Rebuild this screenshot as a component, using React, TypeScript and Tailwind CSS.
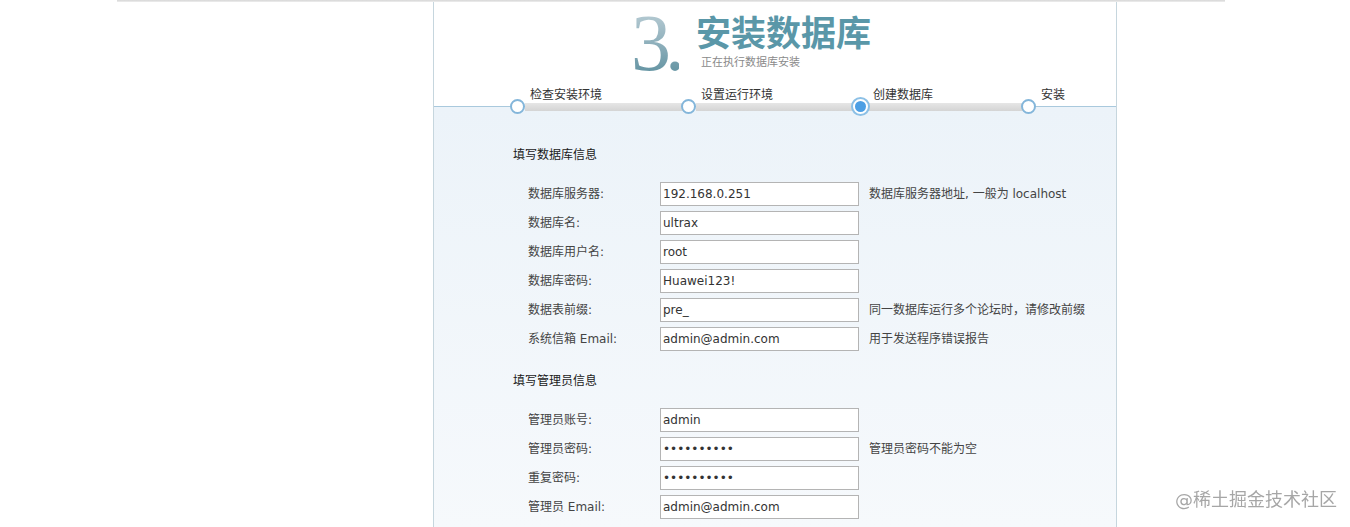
import React from "react";

const cjk = "font-['DejaVu_Sans','Noto_Sans_CJK_SC',sans-serif]";

interface Field {
  label: string;
  value: string;
  note?: string;
}

const dbFields: Field[] = [
  { label: "数据库服务器:", value: "192.168.0.251", note: "数据库服务器地址, 一般为 localhost" },
  { label: "数据库名:", value: "ultrax" },
  { label: "数据库用户名:", value: "root" },
  { label: "数据库密码:", value: "Huawei123!" },
  { label: "数据表前缀:", value: "pre_", note: "同一数据库运行多个论坛时，请修改前缀" },
  { label: "系统信箱 Email:", value: "admin@admin.com", note: "用于发送程序错误报告" },
];

const adminFields: Field[] = [
  { label: "管理员账号:", value: "admin" },
  { label: "管理员密码:", value: "••••••••••", note: "管理员密码不能为空" },
  { label: "重复密码:", value: "••••••••••" },
  { label: "管理员 Email:", value: "admin@admin.com" },
];

const steps = [
  { label: "检查安装环境", width: "w-[171px]" },
  { label: "设置运行环境", width: "w-[172px]" },
  { label: "创建数据库", width: "w-[168px]", active: true },
  { label: "安装", width: "w-[60px]", last: true },
];

export default function App() {
  return (
    <div className={`relative h-[527px] w-full overflow-hidden bg-white ${cjk}`}>
      <div className="ml-[117px] h-[2px] w-[1108px] bg-gradient-to-b from-[#d6d6d6] to-[#eeeeee]" />

      <div className="ml-[433px] h-[525px] w-[684px] border-x border-[#c6d6de]">
        {/* header */}
        <div className="relative h-[105px] border-b border-[#a9c9dd] bg-white">
          <div className="flex items-start pl-[197px]">
            <div className="-mt-[5px] h-[92px] font-['Liberation_Serif',serif] text-[80px] leading-[92px]">
              <span className="bg-gradient-to-b from-[#c8d7dd] via-[#8fb0bc] to-[#4f8797] bg-clip-text tracking-[-6px] text-transparent">
                3.
              </span>
            </div>
            <div className="ml-[17px] mt-[14px] flex flex-col">
              <span className="text-[35px] font-bold leading-[36px] text-[#5a97a8]">安装数据库</span>
              <span className="ml-[5px] mt-[4px] text-[11px] leading-[14px] text-[#8a8a8a]">正在执行数据库安装</span>
            </div>
          </div>

          {/* steps */}
          <div className="relative z-10 -mt-[1px] flex pl-[76px]">
            {steps.map((s) => (
              <div key={s.label} className={`flex flex-col ${s.width}`}>
                <span className="-mb-[3px] pl-[20px] text-[12px] leading-[14px] text-[#333]">{s.label}</span>
                <div className="flex h-[15px] items-center">
                  <div className="relative z-10 flex w-[15px] shrink-0 justify-center">
                    {s.active ? (
                      <div className="flex h-[19px] w-[19px] shrink-0 items-center justify-center rounded-full border-2 border-[#8cc0e6] bg-white">
                        <div className="h-[11px] w-[11px] rounded-full bg-[#4d9fe4]" />
                      </div>
                    ) : (
                      <div className="h-[15px] w-[15px] shrink-0 rounded-full border-2 border-[#84b6da] bg-white" />
                    )}
                  </div>
                  {!s.last && (
                    <div className="-mr-[4px] h-[8px] flex-1 bg-gradient-to-b from-[#e6e6e6] to-[#d4d4d4]" />
                  )}
                </div>
              </div>
            ))}
          </div>
        </div>

        {/* body */}
        <div className="h-[420px] bg-gradient-to-b from-[#ecf3f9] to-[#f6f9fc] pl-[79px] pt-[38px]">
          <Section title="填写数据库信息" fields={dbFields} />
          <div className="h-[20px]" />
          <Section title="填写管理员信息" fields={adminFields} />
        </div>
      </div>

      <div className="absolute bottom-[17px] right-[13px] text-[18px] leading-[20px] text-[#9d9d9d] opacity-90">
        @稀土掘金技术社区
      </div>
    </div>
  );
}

function Section({ title, fields }: { title: string; fields: Field[] }) {
  return (
    <div>
      <div className="mb-[17px] text-[12px] leading-[20px] text-[#1a1a1a]">{title}</div>
      <div className="flex flex-col gap-[5px]">
        {fields.map((f) => (
          <div key={f.label} className="flex h-[24px] items-center">
            <span className="w-[147px] shrink-0 pl-[15px] text-[12px] text-[#444]">{f.label}</span>
            <input
              readOnly
              value={f.value}
              className="h-[24px] w-[199px] shrink-0 border border-[#b4b4b4] bg-white px-[2px] text-[12px] text-[#333] outline-none"
            />
            {f.note && <span className="ml-[10px] text-[12px] text-[#444]">{f.note}</span>}
          </div>
        ))}
      </div>
    </div>
  );
}
